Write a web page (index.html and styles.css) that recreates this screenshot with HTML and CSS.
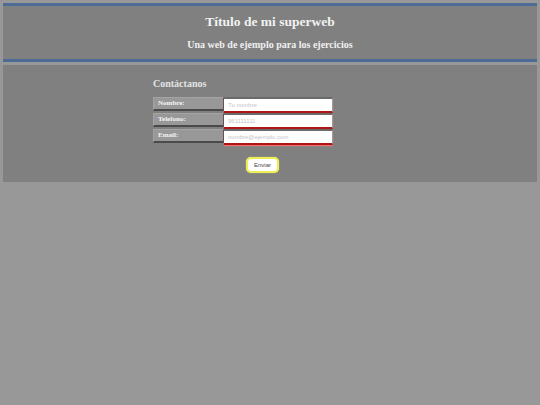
FILE: index.html
```html
<!DOCTYPE html>
<html lang="es">
<head>
<meta charset="utf-8">
<title>Título de mi superweb</title>
<link rel="stylesheet" href="styles.css">
</head>
<body>
  <header class="site-header">
    <h1 class="site-title">Título de mi superweb</h1>
    <h2 class="site-subtitle">Una web de ejemplo para los ejercicios</h2>
  </header>
  <main class="site-main">
    <section class="contact">
      <h3 class="contact-title">Contáctanos</h3>
      <form class="contact-form">
        <div class="field">
          <label class="field-label" for="nombre">Nombre:</label>
          <input class="field-input" id="nombre" type="text" placeholder="Tu nombre">
        </div>
        <div class="field">
          <label class="field-label" for="telefono">Telefono:</label>
          <input class="field-input" id="telefono" type="tel" placeholder="961111111">
        </div>
        <div class="field">
          <label class="field-label" for="email">Email:</label>
          <input class="field-input" id="email" type="email" placeholder="nombre@ejemplo.com">
        </div>
        <button class="send-button" type="button">Enviar</button>
      </form>
    </section>
  </main>
</body>
</html>
```

FILE: styles.css
```css
html, body {
  margin: 0;
  padding: 0;
}

body {
  background: #989898;
  padding: 3px;
  font-family: "Liberation Serif", "Times New Roman", serif;
  color: #eeeeee;
}

/* Header with blue rules above and below */
.site-header {
  background: #808080;
  border-top: 3px solid #4d6c95;
  border-bottom: 3px solid #4d6c95;
  padding: 8px 0;
  text-align: center;
}

.site-title {
  margin: 0;
  font-size: 13.5px;
  line-height: 16px;
  font-weight: bold;
  color: #f2f2f2;
}

.site-subtitle {
  margin: 9px 0 0;
  font-size: 10px;
  line-height: 12px;
  font-weight: bold;
  color: #f0f0f0;
}

/* Main content area */
.site-main {
  margin-top: 3px;
  background: #808080;
  padding: 13px 0 9px;
}

.contact {
  width: 234px;
  margin: 0 auto;
}

.contact-title {
  margin: 0 0 7px;
  font-size: 10px;
  line-height: 12px;
  font-weight: bold;
  color: #e4e4e4;
}

.contact-form {
  display: flex;
  flex-direction: column;
  gap: 2px;
}

.field {
  display: flex;
  height: 14px;
}

.field-label {
  box-sizing: border-box;
  width: 71px;
  height: 14px;
  padding: 0 4px;
  background: #989898;
  border-top: 1px solid #a4a4a4;
  border-left: 1px solid #a4a4a4;
  border-right: 1px solid #4a4a4a;
  border-bottom: 2px solid #4a4a4a;
  font-size: 7px;
  line-height: 11px;
  font-weight: bold;
  color: #f4f4f4;
}

.field-input {
  box-sizing: border-box;
  width: 109px;
  height: 16px;
  margin: 0;
  padding: 0 4px;
  background: #ffffff;
  border: none;
  border-top: 2px solid #6a6a6a;
  border-right: 1px solid #9a9a9a;
  border-bottom: 2px solid #b01515;
  box-shadow: 0 1px 1px #f07070;
  font-family: "Liberation Sans", Arial, sans-serif;
  font-size: 6px;
  color: #333;
  outline: none;
}

.field-input::placeholder {
  color: #c4c4c4;
}

.send-button {
  align-self: flex-start;
  box-sizing: border-box;
  width: 33px;
  height: 16px;
  margin: 12px 0 0 93px;
  padding: 0;
  background: #ffffff;
  border: 2px solid #eeee55;
  border-radius: 5px;
  box-shadow: 0 0 1px #f4f47a;
  font-family: "Liberation Sans", Arial, sans-serif;
  font-size: 6px;
  color: #444;
}
```
